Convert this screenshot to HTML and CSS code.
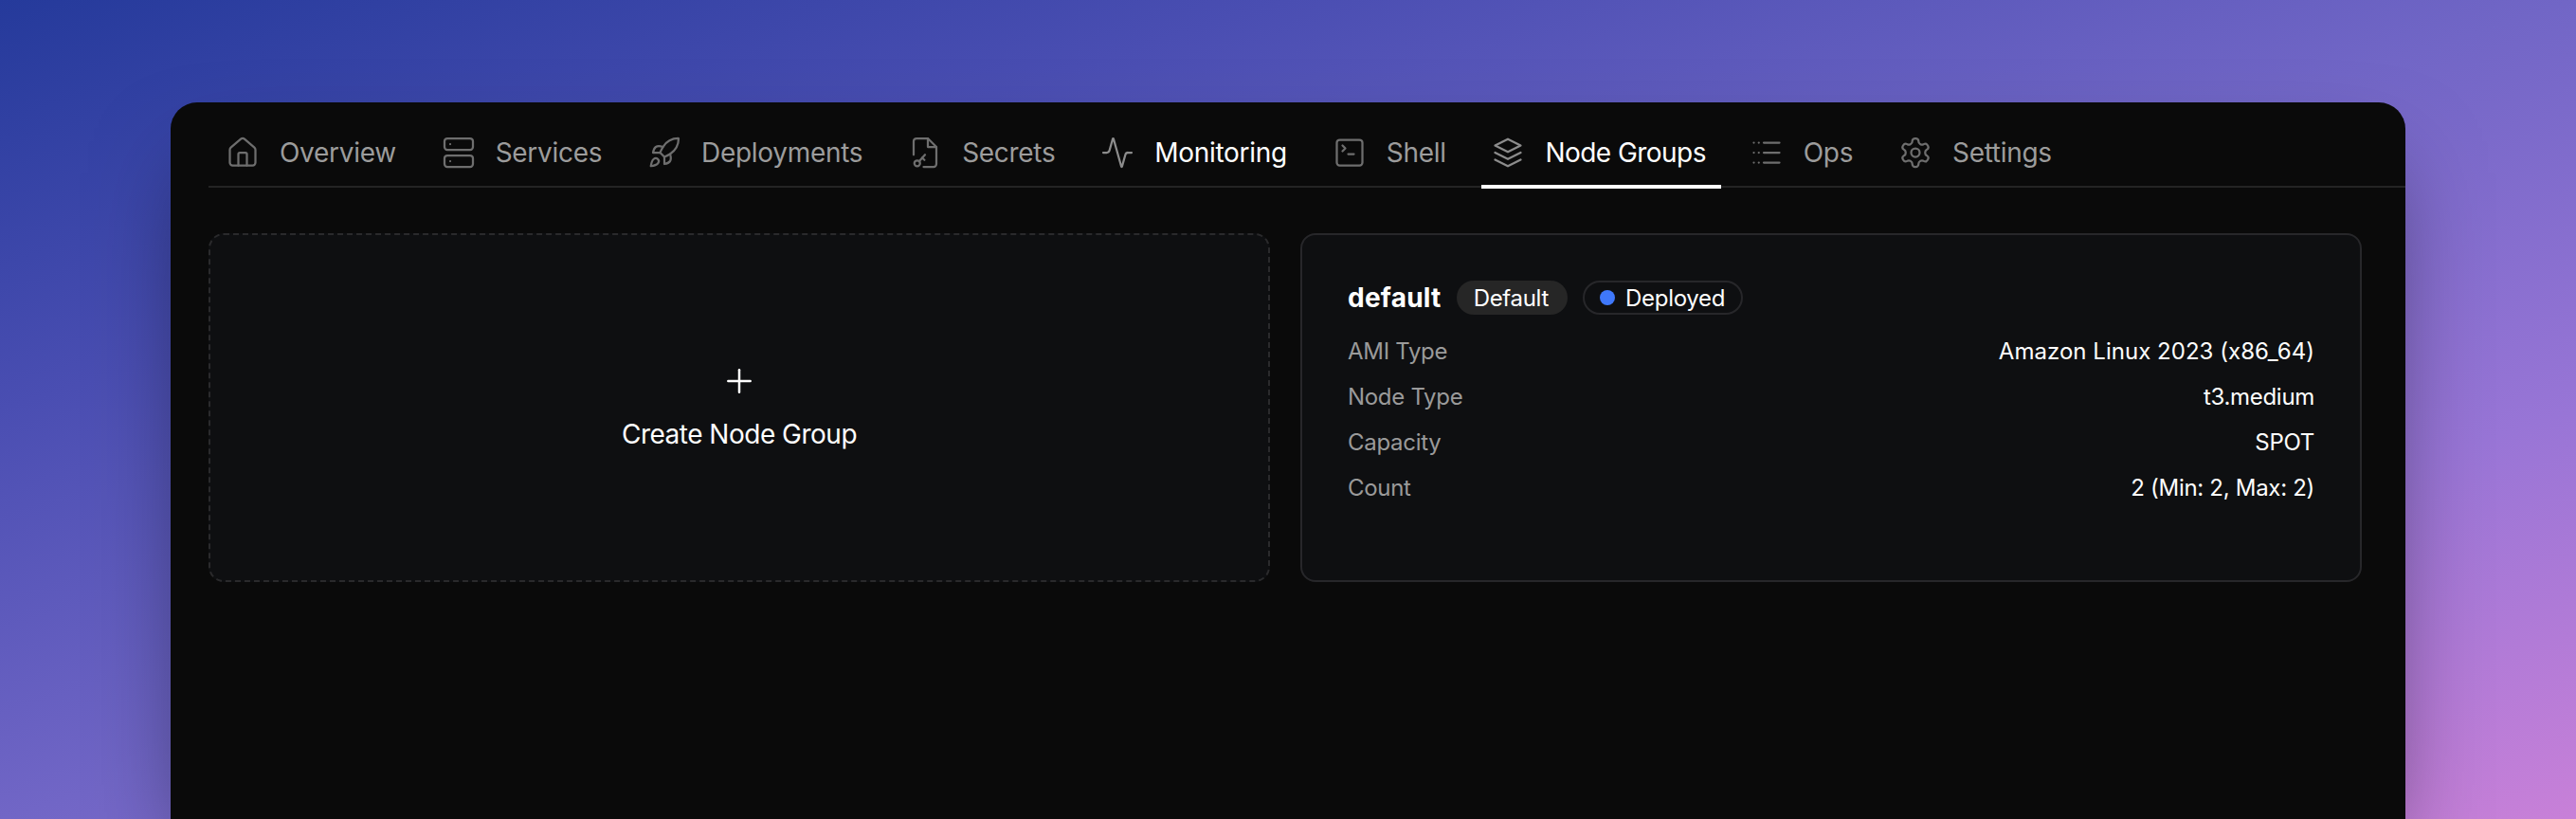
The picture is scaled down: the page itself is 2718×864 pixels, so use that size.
FILE: index.html
```html
<!DOCTYPE html>
<html lang="en">
<head>
<meta charset="utf-8">
<title>Node Groups</title>
<link rel="stylesheet" href="styles.css">
</head>
<body>
<main class="window">
  <nav class="tabs">
    <a class="tab"><svg class="icon" viewBox="0 0 24 24"><path d="M15 21v-8a1 1 0 0 0-1-1h-4a1 1 0 0 0-1 1v8"/><path d="M3 10a2 2 0 0 1 .709-1.528l7-5.999a2 2 0 0 1 2.582 0l7 5.999A2 2 0 0 1 21 10v9a2 2 0 0 1-2 2H5a2 2 0 0 1-2-2z"/></svg><span>Overview</span></a>
    <a class="tab"><svg class="icon" viewBox="0 0 24 24"><rect x="2" y="2" width="20" height="8" rx="2"/><rect x="2" y="14" width="20" height="8" rx="2"/><path d="M6 6h.01"/><path d="M6 18h.01"/></svg><span>Services</span></a>
    <a class="tab"><svg class="icon" viewBox="0 0 24 24"><path d="M4.5 16.5c-1.5 1.26-2 5-2 5s3.74-.5 5-2c.71-.84.7-2.13-.09-2.91a2.18 2.18 0 0 0-2.91-.09z"/><path d="m12 15-3-3a22 22 0 0 1 2-3.95A12.88 12.88 0 0 1 22 2c0 2.72-.78 7.5-6 11a22.35 22.35 0 0 1-4 2z"/><path d="M9 12H4s.55-3.03 2-4c1.62-1.08 5 0 5 0"/><path d="M12 15v5s3.03-.55 4-2c1.08-1.62 0-5 0-5"/></svg><span>Deployments</span></a>
    <a class="tab"><svg class="icon" viewBox="0 0 24 24"><path d="M4 13.5V4a2 2 0 0 1 2-2h8l6 6v12a2 2 0 0 1-2 2h-7"/><path d="M14 2v6h6"/><circle cx="6.5" cy="19.5" r="2"/><path d="m8 18 4-4.5"/><path d="m10 15.7 1.6 1.5"/></svg><span>Secrets</span></a>
    <a class="tab hover"><svg class="icon" viewBox="0 0 24 24"><path d="M22 12h-2.48a2 2 0 0 0-1.93 1.46l-2.35 8.36a.25.25 0 0 1-.48 0L9.24 2.18a.25.25 0 0 0-.48 0l-2.35 8.36A2 2 0 0 1 4.49 12H2"/></svg><span>Monitoring</span></a>
    <a class="tab"><svg class="icon" viewBox="0 0 24 24"><path d="m7 11 2-2-2-2"/><path d="M11 13h4"/><rect x="3" y="3" width="18" height="18" rx="2"/></svg><span>Shell</span></a>
    <a class="tab active"><svg class="icon" viewBox="0 0 24 24"><path d="M12 2.5 21 7l-9 4.5L3 7z"/><path d="m3 12 9 4.5 9-4.5"/><path d="m3 17 9 4.5 9-4.5"/></svg><span>Node Groups</span></a>
    <a class="tab"><svg class="icon" viewBox="0 0 24 24"><path d="M10 5h11"/><path d="M10 12h11"/><path d="M10 19h11"/><path d="M3 5h.01"/><path d="M3 12h.01"/><path d="M3 19h.01"/><path d="M6.5 5h.01"/><path d="M6.5 12h.01"/><path d="M6.5 19h.01"/></svg><span>Ops</span></a>
    <a class="tab"><svg class="icon" viewBox="0 0 24 24"><path d="M12.22 2h-.44a2 2 0 0 0-2 2v.18a2 2 0 0 1-1 1.73l-.43.25a2 2 0 0 1-2 0l-.15-.08a2 2 0 0 0-2.73.73l-.22.38a2 2 0 0 0 .73 2.73l.15.1a2 2 0 0 1 1 1.72v.51a2 2 0 0 1-1 1.74l-.15.09a2 2 0 0 0-.73 2.73l.22.38a2 2 0 0 0 2.73.73l.15-.08a2 2 0 0 1 2 0l.43.25a2 2 0 0 1 1 1.73V20a2 2 0 0 0 2 2h.44a2 2 0 0 0 2-2v-.18a2 2 0 0 1 1-1.73l.43-.25a2 2 0 0 1 2 0l.15.08a2 2 0 0 0 2.73-.73l.22-.39a2 2 0 0 0-.73-2.73l-.15-.08a2 2 0 0 1-1-1.74v-.5a2 2 0 0 1 1-1.74l.15-.09a2 2 0 0 0 .73-2.73l-.22-.38a2 2 0 0 0-2.73-.73l-.15.08a2 2 0 0 1-2 0l-.43-.25a2 2 0 0 1-1-1.73V4a2 2 0 0 0-2-2z"/><circle cx="12" cy="12" r="3"/></svg><span>Settings</span></a>
  </nav>
  <section class="grid">
    <button class="create">
      <svg class="plus" viewBox="0 0 24 24"><path d="M5 12h14"/><path d="M12 5v14"/></svg>
      <span>Create Node Group</span>
    </button>
    <article class="card">
      <header class="card-head">
        <h2 class="name">default</h2>
        <span class="pill pill-fill">Default</span>
        <span class="pill pill-line"><i class="dot"></i>Deployed</span>
      </header>
      <dl class="rows">
        <div class="row"><dt>AMI Type</dt><dd class="wide">Amazon Linux 2023 (x86_64)</dd></div>
        <div class="row"><dt>Node Type</dt><dd>t3.medium</dd></div>
        <div class="row"><dt>Capacity</dt><dd>SPOT</dd></div>
        <div class="row"><dt>Count</dt><dd>2 (Min: 2, Max: 2)</dd></div>
      </dl>
    </article>
  </section>
</main>
</body>
</html>
```

FILE: styles.css
```css
* { box-sizing: border-box; }
html, body { height: 100%; margin: 0; overflow: hidden; }
body {
  display: flex;
  flex-direction: column;
  padding: 108px 180px 0;
  background: linear-gradient(to bottom right, #253a9b 0%, #4a4eb2 25%, #7166c6 50%, #9875d6 75%, #c880d8 100%);
  font-family: Inter, "Liberation Sans", sans-serif;
  color: #fff;
}
.window {
  flex: 1;
  padding-left: 40px;
  background: #0a0a0a;
  border-radius: 28px 28px 0 0;
  box-shadow: 0 50px 100px -24px rgba(0, 0, 0, .5);
}
.tabs {
  display: flex;
  gap: 19.8px;
  height: 90px;
  padding-left: 8px;
  border-bottom: 2px solid #242424;
}
.tab {
  display: flex;
  align-items: center;
  gap: 21px;
  height: 91px;
  padding: 18px 18px 0 10px;
  font-size: 28px;
  font-weight: 430;
  letter-spacing: -.29px;
  color: #9c9c9c;
  border-bottom: 4px solid transparent;
}
.tab.hover { color: #fff; }
.tab.active {
  padding-right: 16px;
  letter-spacing: -.55px;
  color: #fff;
  border-bottom-color: #fff;
}
.icon {
  flex: none;
  width: 36px;
  height: 36px;
  fill: none;
  stroke: #6e6e6e;
  stroke-width: 1.5;
  stroke-linecap: round;
  stroke-linejoin: round;
}
.tab.active .icon, .tab.hover .icon { stroke: #8c8c8c; }
.grid {
  display: grid;
  grid-template-columns: 1120px 1120px;
  gap: 32px;
  margin-top: 48px;
}
.create, .card {
  height: 368px;
  background: #0e0f11;
  border-radius: 16px;
}
.create {
  display: flex;
  flex-direction: column;
  align-items: center;
  justify-content: center;
  gap: 16px;
  border: 2px dashed #2a2a2c;
  font: inherit;
  font-size: 28px;
  letter-spacing: -.5px;
  line-height: 40px;
  color: #fff;
}
.plus {
  width: 40px;
  height: 40px;
  fill: none;
  stroke: #fff;
  stroke-width: 1.5;
  stroke-linecap: round;
}
.card {
  padding: 48px;
  border: 2px solid #27272a;
}
.card-head {
  display: flex;
  align-items: center;
  gap: 16px;
  height: 36px;
}
.name {
  margin: 0;
  font-size: 28px;
  font-weight: 700;
  letter-spacing: .25px;
}
.pill {
  display: flex;
  align-items: center;
  height: 36px;
  border-radius: 18px;
  font-size: 24px;
  letter-spacing: -.3px;
}
.pill-fill { padding: 0 20px 0 18px; background: #262626; }
.pill-line { gap: 11px; padding: 0 17px 0 16px; border: 2px solid #27272a; }
.dot { width: 16px; height: 16px; border-radius: 50%; background: #3f78fb; }
.rows { margin: 15px 0 0; }
.row {
  display: flex;
  justify-content: space-between;
  font-size: 24px;
  line-height: 48px;
  letter-spacing: -.3px;
}
.row dt { color: #9a9a9a; }
.row dd { margin: 0; color: #fff; }
.row dd.wide { letter-spacing: .03px; }
```
